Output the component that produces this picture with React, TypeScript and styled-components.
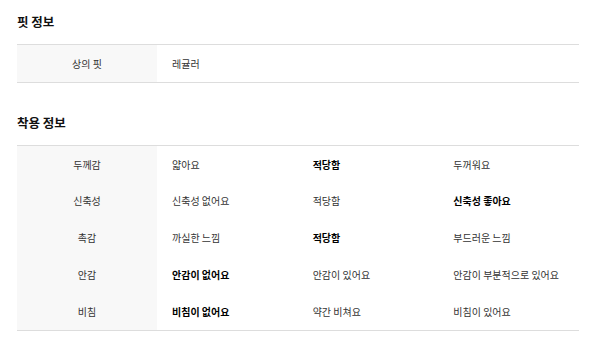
import React from 'react';
import styled, { createGlobalStyle } from 'styled-components';

const GlobalStyle = createGlobalStyle`
  body {
    margin: 0;
    background: #fff;
    font-family: 'Noto Sans CJK KR', 'Noto Sans', sans-serif;
    color: #333;
  }
`;

type Cell = { text: string; bold?: boolean };
type Row = { label: string; values: Cell[] };

const fitRows: Row[] = [{ label: '상의 핏', values: [{ text: '레귤러' }] }];

const wearRows: Row[] = [
  {
    label: '두께감',
    values: [{ text: '얇아요' }, { text: '적당함', bold: true }, { text: '두꺼워요' }],
  },
  {
    label: '신축성',
    values: [{ text: '신축성 없어요' }, { text: '적당함' }, { text: '신축성 좋아요', bold: true }],
  },
  {
    label: '촉감',
    values: [{ text: '까실한 느낌' }, { text: '적당함', bold: true }, { text: '부드러운 느낌' }],
  },
  {
    label: '안감',
    values: [{ text: '안감이 없어요', bold: true }, { text: '안감이 있어요' }, { text: '안감이 부분적으로 있어요' }],
  },
  {
    label: '비침',
    values: [{ text: '비침이 없어요', bold: true }, { text: '약간 비쳐요' }, { text: '비침이 있어요' }],
  },
];

function InfoTable({ rows, cols }: { rows: Row[]; cols: number }) {
  return (
    <Table $cols={cols}>
      {rows.map((row) => (
        <React.Fragment key={row.label}>
          <LabelCell>{row.label}</LabelCell>
          {row.values.map((v, i) => (
            <ValueCell key={i} $bold={v.bold}>
              {v.text}
            </ValueCell>
          ))}
        </React.Fragment>
      ))}
    </Table>
  );
}

export default function App() {
  return (
    <Page>
      <GlobalStyle />
      <Section>
        <Title>핏 정보</Title>
        <InfoTable rows={fitRows} cols={1} />
      </Section>
      <Section>
        <Title>착용 정보</Title>
        <InfoTable rows={wearRows} cols={3} />
      </Section>
    </Page>
  );
}

const Page = styled.div`
  width: 562px;
  padding: 12px 17px 0;
`;

const Section = styled.section`
  margin-bottom: 30px;
`;

const Title = styled.h3`
  margin: 0 0 12px;
  font-size: 12.5px;
  line-height: 20px;
  font-weight: 700;
  color: #111;
`;

const Table = styled.div<{ $cols: number }>`
  display: grid;
  grid-template-columns: 140px ${({ $cols }) => ($cols === 1 ? '1fr' : `repeat(${$cols}, 1fr)`)};
  border-top: 1px solid #ddd;
  border-bottom: 1px solid #ddd;
`;

const LabelCell = styled.div`
  height: 36.8px;
  display: flex;
  align-items: center;
  justify-content: center;
  background: #f8f8f8;
  font-size: 10px;
  color: #333;
`;

const ValueCell = styled.div<{ $bold?: boolean }>`
  height: 36.8px;
  display: flex;
  align-items: center;
  padding-left: 15px;
  font-size: 10px;
  font-weight: ${({ $bold }) => ($bold ? 700 : 400)};
  color: ${({ $bold }) => ($bold ? '#000' : '#333')};
`;
